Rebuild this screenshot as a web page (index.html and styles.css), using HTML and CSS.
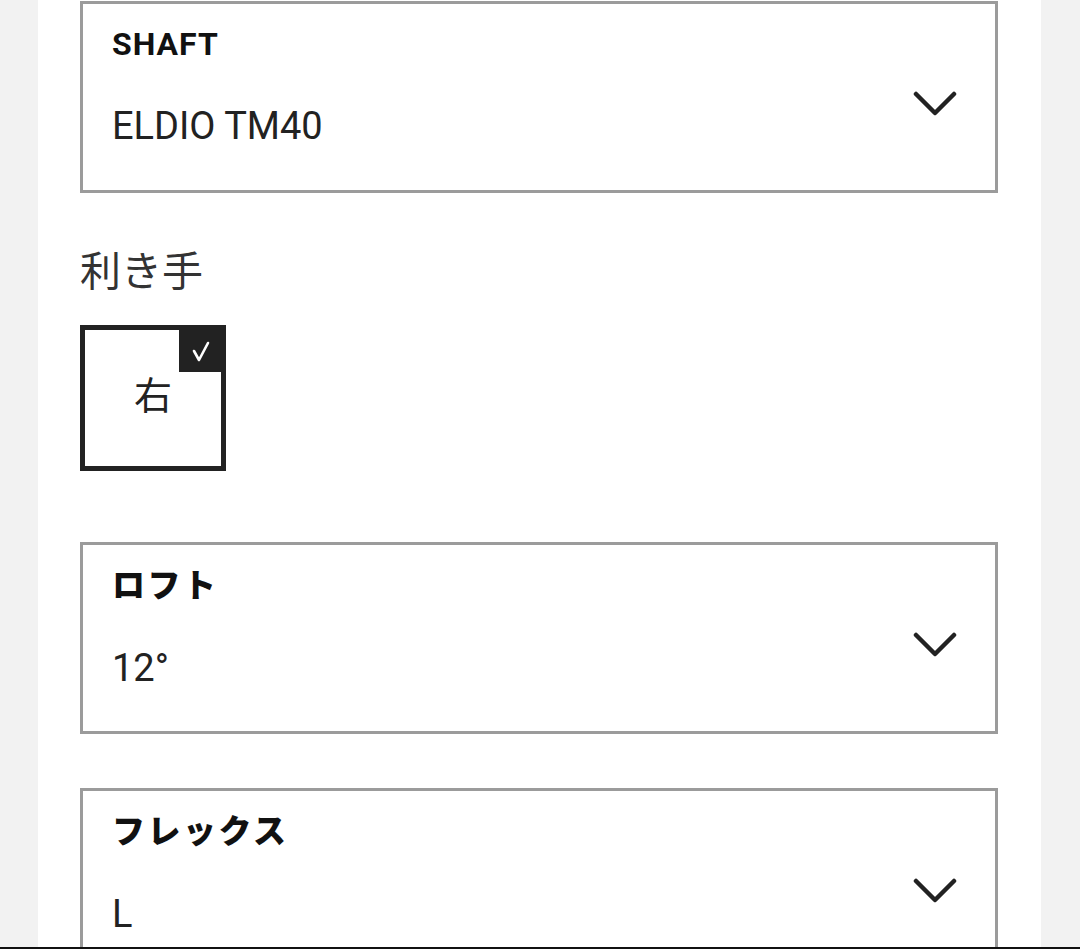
FILE: index.html
```html
<!DOCTYPE html>
<html lang="ja">
<head>
  <meta charset="UTF-8">
  <meta name="viewport" content="width=device-width, initial-scale=1.0">
  <title>カスタムオーダー</title>
  <link rel="stylesheet" href="styles.css">
</head>
<body>
  <div class="page">
    <div class="select">
      <div class="select-text">
        <div class="select-label">SHAFT</div>
        <div class="select-value">ELDIO TM40</div>
      </div>
      <svg class="chevron" viewBox="0 0 44 26" width="44" height="26"><polyline points="3,3 22,22 41,3"/></svg>
    </div>

    <div class="hand-title">利き手</div>
    <div class="hand-options">
      <div class="hand-option selected">
        右
        <span class="check">
          <svg viewBox="0 0 42 42" width="42" height="42"><polyline points="15,21 20,30 29,13"/></svg>
        </span>
      </div>
    </div>

    <div class="select select-loft">
      <div class="select-text">
        <div class="select-label jp">ロフト</div>
        <div class="select-value">12°</div>
      </div>
      <svg class="chevron" viewBox="0 0 44 26" width="44" height="26"><polyline points="3,3 22,22 41,3"/></svg>
    </div>

    <div class="select select-flex">
      <div class="select-text">
        <div class="select-label jp">フレックス</div>
        <div class="select-value">L</div>
      </div>
      <svg class="chevron" viewBox="0 0 44 26" width="44" height="26"><polyline points="3,3 22,22 41,3"/></svg>
    </div>
  </div>
</body>
</html>
```

FILE: styles.css
```css
body {
  margin: 0;
  height: 949px;
  overflow: hidden;
  box-sizing: border-box;
  border-bottom: 2px solid #111;
  background-color: #f2f2f2;
  font-family: Roboto, "Noto Sans CJK JP", sans-serif;
  color: #1a1a1a;
}
.page {
  margin: 0 39px 0 38px;
  padding: 1px 43px 0 42px;
  min-height: 100%;
  background-color: #fff;
}
.select {
  display: flex;
  height: 192px;
  box-sizing: border-box;
  border: 3px solid #9b9b9b;
  background-color: #fff;
}
.select-loft {
  margin-top: 71px;
}
.select-flex {
  margin-top: 54px;
}
.select-text {
  flex: 1;
  padding: 24px 0 0 29px;
}
.select-label {
  font-size: 32px;
  line-height: 1;
  font-weight: 700;
  letter-spacing: 1px;
  color: #111;
}
.select-label.jp {
  font-size: 33px;
  font-weight: 900;
  letter-spacing: 2.5px;
}
.select-value {
  margin-top: 47px;
  font-size: 38px;
  line-height: 1;
  color: #222;
}
.chevron {
  margin: 87px 38px 0 0;
  fill: none;
  stroke: #222;
  stroke-width: 4.5;
  stroke-linecap: round;
  stroke-linejoin: round;
}
.hand-title {
  margin-top: 59px;
  font-size: 41px;
  line-height: 1;
  color: #333;
}
.hand-options {
  display: flex;
  margin-top: 32px;
}
.hand-option {
  position: relative;
  display: flex;
  justify-content: center;
  align-items: center;
  width: 146px;
  height: 146px;
  box-sizing: border-box;
  border: 5px solid #222;
  padding-bottom: 12px;
  font-size: 38px;
  color: #222;
}
.check {
  position: absolute;
  top: 0;
  right: 0;
  width: 42px;
  height: 42px;
  background-color: #222;
}
.check svg {
  display: block;
  fill: none;
  stroke: #fff;
  stroke-width: 2.6;
  stroke-linecap: round;
  stroke-linejoin: round;
}
```
